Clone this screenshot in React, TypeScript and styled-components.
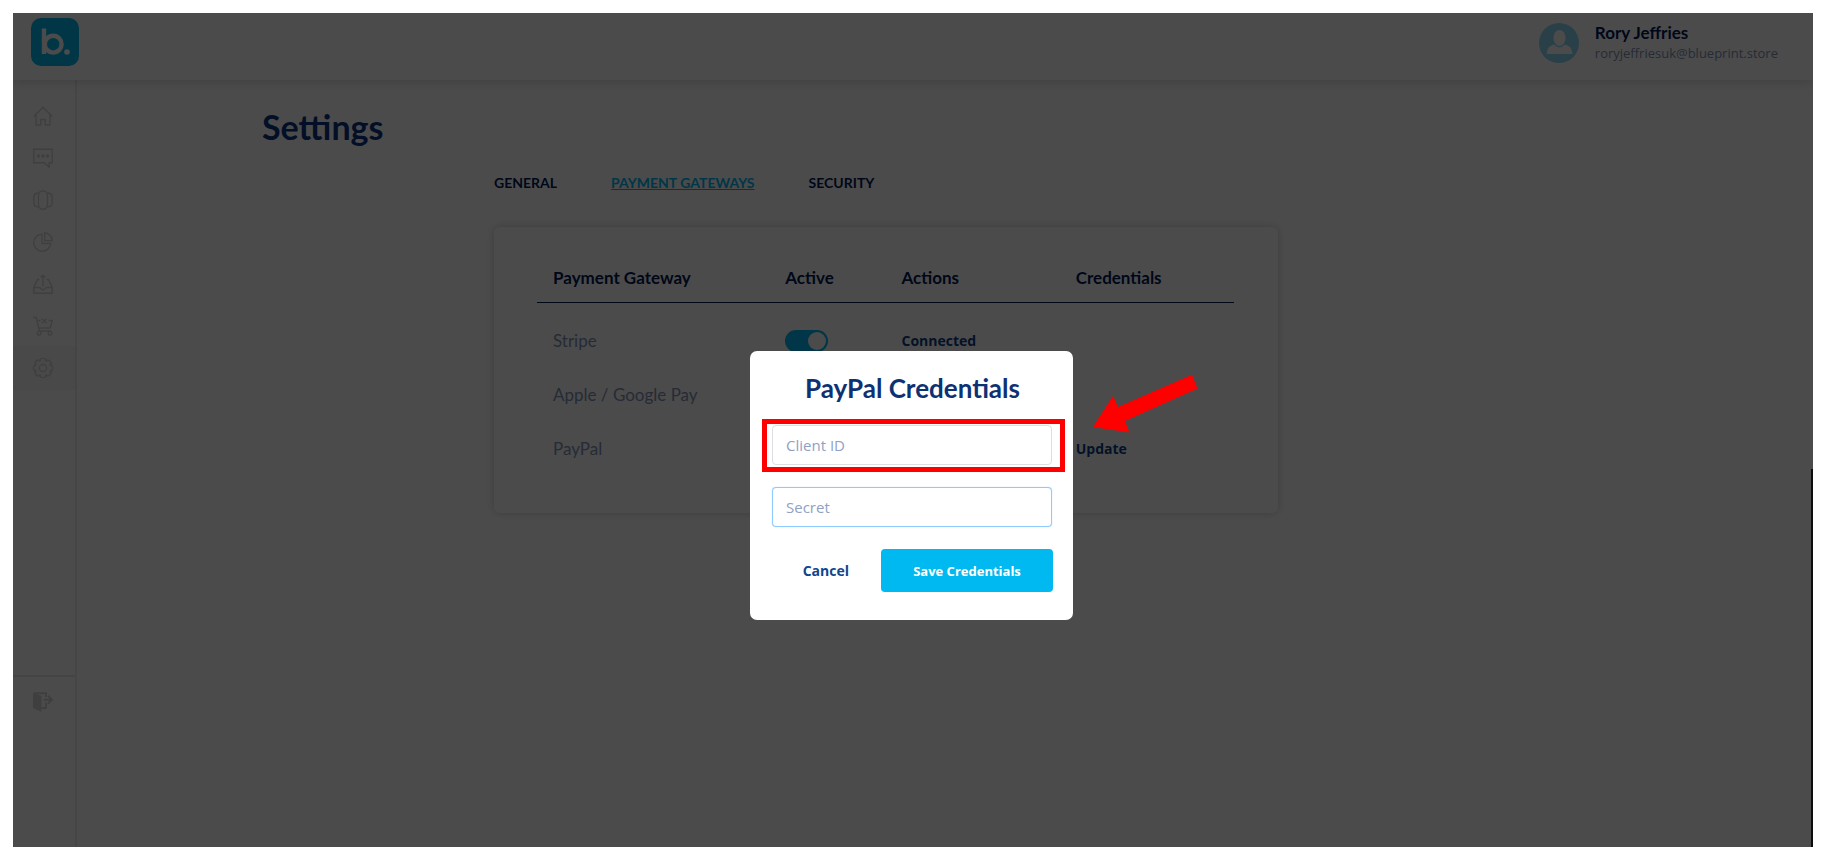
import React from "react";
import styled, { createGlobalStyle } from "styled-components";

const heading = `Lato, "Open Sans", sans-serif`;
const body = `"Open Sans", "Noto Sans", sans-serif`;

const GlobalStyle = createGlobalStyle`
  *, *::before, *::after { box-sizing: border-box; }
  body { margin: 0; background: #fff; font-family: ${body}; color: #001a57; }
`;

const Page = styled.div`
  min-height: 100vh;
  padding: 13px 17px 17px 13px;
  display: flex;
`;

const Window = styled.div`
  position: relative;
  flex: 1;
  min-width: 0;
  display: flex;
  flex-direction: column;
  overflow: hidden;
  background: #fff;
`;

const Header = styled.header`
  position: relative;
  height: 67px;
  padding: 0 35px 0 18px;
  display: flex;
  align-items: center;
  justify-content: space-between;
  box-shadow: 0 3px 10px rgba(0, 0, 0, 0.14);
`;

const HomeLink = styled.a`
  display: block;
  height: 58px;
`;

const Account = styled.div`
  display: flex;
  align-items: center;
  gap: 16px;
  margin-bottom: 8px;
`;

const AccountName = styled.div`
  font: 700 17px/20px ${heading};
`;

const AccountEmail = styled.div`
  font-size: 13px;
  line-height: 20px;
  color: #8394b8;
`;

const Columns = styled.div`
  flex: 1;
  display: flex;
`;

const Sidebar = styled.nav`
  width: 64px;
  padding-top: 15px;
  border-right: 2px solid #ececec;
`;

const SidebarLink = styled.a<{ $active?: boolean }>`
  height: 42px;
  display: flex;
  align-items: center;
  justify-content: center;
  padding-right: 2px;
  color: #d6d6d6;
  background: ${(p) => (p.$active ? "#f6f6f6" : "transparent")};
  box-shadow: ${(p) => (p.$active ? "0 0 2px #e0e0e0" : "none")};
`;

const SidebarFooter = styled.div`
  margin-top: 286px;
  padding-top: 4px;
  border-top: 2px solid #e8e8e8;
`;

const Main = styled.main`
  flex: 1;
  min-width: 0;
`;

const Container = styled.div`
  max-width: 1366px;
  margin: 0 auto;
  padding-top: 25px;
`;

const Title = styled.h1`
  margin: 0;
  font: 700 34px/44px ${heading};
  color: #0d3583;
`;

const Panel = styled.section`
  max-width: 784px;
  margin-left: 232px;
`;

const Tabs = styled.div`
  display: flex;
  gap: 54px;
  padding: 24px 0 34px;
`;

const Tab = styled.a<{ $active?: boolean }>`
  font: 700 14px/20px ${heading};
  color: ${(p) => (p.$active ? "#00b9f0" : "#001a57")};
  text-decoration: ${(p) => (p.$active ? "underline" : "none")};
`;

const Card = styled.div`
  padding: 27px 44px 37px 43px;
  border-radius: 6px;
  box-shadow: 0 0 8px rgba(0, 0, 0, 0.2);
`;

const Table = styled.table`
  width: 100%;
  table-layout: fixed;
  border-collapse: collapse;
`;

const HeadCell = styled.th<{ $width: string }>`
  width: ${(p) => p.$width};
  height: 48px;
  padding: 0 16px;
  text-align: left;
  font: 700 17px/20px ${heading};
  border-bottom: 1px solid #001a57;
`;

const Cell = styled.td`
  height: 54px;
  padding: 0 16px;
  font: 400 17px/20px ${heading};
  color: #8394b8;
`;

const Body = styled.tbody`
  &::before {
    content: "";
    display: block;
    height: 11px;
  }
`;

const CellAction = styled.button`
  display: block;
  border: 0;
  padding: 0;
  background: none;
  font: 700 14px/20px ${body};
  color: #0d3f88;
`;

const Toggle = styled.input`
  appearance: none;
  display: block;
  width: 43px;
  height: 22px;
  margin: 0;
  padding: 2px;
  border-radius: 11px;
  background: #d5dbe6;
  &::before {
    content: "";
    display: block;
    width: 18px;
    height: 18px;
    border-radius: 50%;
    background: #fff;
  }
  &:checked {
    background: #00b9f0;
  }
  &:checked::before {
    margin-left: auto;
  }
`;

const Backdrop = styled.div`
  position: absolute;
  inset: 0;
  padding: 338px 3px 0 0;
  display: flex;
  align-items: flex-start;
  justify-content: center;
  background: rgba(0, 0, 0, 0.705);
`;

const ScrollThumb = styled.div`
  position: absolute;
  right: 0;
  top: 456px;
  bottom: 0;
  width: 2px;
  background: #0c0c0c;
`;

const Dialog = styled.form`
  position: relative;
  width: 323px;
  padding: 18px 20px 28px 22px;
  border-radius: 7px;
  background: #fff;
`;

const DialogTitle = styled.h2`
  margin: 0 0 18px;
  text-align: center;
  font: 700 26px/38px ${heading};
  color: #0d3274;
`;

const Fields = styled.div`
  display: grid;
  gap: 22px;
  padding-right: 1px;
`;

const Field = styled.input<{ $focused?: boolean }>`
  width: 100%;
  height: 40px;
  padding: 0 13px;
  border: 1px solid ${(p) => (p.$focused ? "#8fcbff" : "#dcdfe4")};
  border-radius: 4px;
  outline: 0;
  background: #fff;
  box-shadow: ${(p) => (p.$focused ? "0 0 1px #8fcbff" : "none")};
  font: 400 15px/20px ${body};
  color: #0d3274;
  &::placeholder {
    color: #8fa1c4;
    opacity: 1;
  }
`;

const Actions = styled.div`
  display: flex;
  align-items: center;
  justify-content: flex-end;
  gap: 32px;
  padding-top: 22px;
`;

const CancelButton = styled.button`
  border: 0;
  padding: 0;
  background: none;
  font: 700 14px/20px ${body};
  color: #0d478f;
`;

const SaveButton = styled.button`
  width: 172px;
  height: 43px;
  border: 0;
  border-radius: 4px;
  background: #00b9f0;
  font: 700 13px/20px ${body};
  color: #fff;
`;

const Highlight = styled.div`
  position: absolute;
  left: 12px;
  right: 8px;
  top: 68px;
  height: 53px;
  border: 5px solid #f00;
  pointer-events: none;
`;

const Pointer = styled.svg`
  position: absolute;
  left: 343px;
  top: 23px;
  pointer-events: none;
`;

const Logo = () => (
  <svg width="48" height="48" viewBox="0 0 48 48" aria-label="blueprint">
    <rect width="48" height="48" rx="10" fill="#00b9ec" />
    <g fill="none" stroke="#fff" strokeWidth="4.4">
      <path d="M13 10.500V36" />
      <circle cx="22.2" cy="26.200" r="8.400" />
    </g>
    <circle cx="36" cy="34" r="2.8" fill="#fff" />
  </svg>
);

const Avatar = () => (
  <svg width="40" height="40" viewBox="0 0 40 40" aria-hidden="true">
    <circle cx="20" cy="20" r="20" fill="#8fd8f8" />
    <ellipse cx="20.500" cy="15" rx="6" ry="8" fill="#fff" />
    <path d="M7.500 31C8 25 10.500 23 15 21.500Q20.500 27 26 21.500C30.500 23 33 25 33.500 31Z" fill="#fff" />
  </svg>
);

// Outline of an eight-toothed gear centred on 10,10.
const gearPoints = Array.from({ length: 8 }, (_, tooth) =>
  [
    [-16, 9.3],
    [-7, 9.7],
    [7, 9.7],
    [16, 9.3],
    [18, 7.8],
    [27, 7.8],
  ].map(([offset, radius]) => {
    const angle = ((tooth * 45 + offset) * Math.PI) / 180;
    return `${(10 + radius * Math.sin(angle)).toFixed(2)},${(10 - radius * Math.cos(angle)).toFixed(2)}`;
  })
)
  .flat()
  .join(" ");

const icons: Record<string, React.ReactNode> = {
  Home: <path d="M.8 10.500 10 1.200l9.200 9.300M3 9v10h4.800v-5.500h4.400V19H17V9" />,
  Messages: (
    <>
      <path d="M.8 1.200h18.400v13.600h-3v4.400l-4.800-4.400H.8z" />
      <g fill="currentColor" stroke="none">
        <circle cx="5.400" cy="8" r="1.700" />
        <circle cx="10" cy="8" r="1.700" />
        <circle cx="14.600" cy="8" r="1.700" />
      </g>
    </>
  ),
  Carousel: (
    <>
      <rect x="5.500" y=".8" width="9" height="18.400" rx="4.500" />
      <path d="M5.500 3C2.500 3 .8 4.500.8 7.500v5c0 3 1.700 4.500 4.700 4.500M14.500 3c3 0 4.700 1.500 4.700 4.500v5c0 3-1.700 4.500-4.700 4.500" />
    </>
  ),
  Reports: (
    <>
      <path d="M9 2.200a8.500 8.500 0 1 0 8.700 9.300H9z" />
      <path d="M11.700.8v8h7.500a8 8 0 0 0-7.500-8z" />
    </>
  ),
  Exports: (
    <>
      <path d="M6.500 5.500H4.500L.8 13.500v5.700h18.400v-5.700L15.500 5.500h-2M.8 13.500h5.700l3.500 2.700 3.500-2.700h5.700" />
      <path d="M10 12.500V1.500M7.500 3.500 10 1.200l2.500 2.300" />
    </>
  ),
  Baskets: (
    <>
      <path d="M.3 1.500h3l3 13.500h11.500M4 4.500h3.500M15.500 4.500h3.700l-2 7.500H5.700M8.800 2.800l5 4.500M13.800 2.800l-5 4.500" />
      <circle cx="6" cy="17.200" r="1.800" />
      <circle cx="17" cy="17.200" r="1.800" />
    </>
  ),
  Settings: (
    <>
      <polygon points={gearPoints} strokeLinejoin="round" />
      <circle cx="10" cy="10" r="3.600" />
    </>
  ),
};

const Icon = ({ name }: { name: string }) => (
  <svg width="20" height="20" viewBox="0 0 20 20" fill="none" stroke="currentColor" strokeWidth="1.400" aria-hidden="true">
    {icons[name]}
  </svg>
);

const LogoutIcon = () => (
  <svg width="20" height="20" viewBox="0 0 20 20" aria-hidden="true">
    <path d="M0 .5 8.500 4v16L0 16z" fill="currentColor" />
    <path d="M1 1.200h12V5M13 10.500V16H8.500M10.500 7.700H18M15 3.700l4 4-4 4" fill="none" stroke="currentColor" strokeWidth="2" />
  </svg>
);

const gateways = [
  { name: "Stripe", active: true, action: "Connected" },
  { name: "Apple / Google Pay", active: true },
  { name: "PayPal", active: true, credentials: "Update" },
];

export default function App() {
  return (
    <>
      <GlobalStyle />
      <Page>
        <Window>
          <Header>
            <HomeLink href="#">
              <Logo />
            </HomeLink>
            <Account>
              <Avatar />
              <div>
                <AccountName>Rory Jeffries</AccountName>
                <AccountEmail>roryjeffriesuk@blueprint.store</AccountEmail>
              </div>
            </Account>
          </Header>
          <Columns>
            <Sidebar>
              {Object.keys(icons).map((name) => (
                <SidebarLink key={name} href="#" aria-label={name} $active={name === "Settings"}>
                  <Icon name={name} />
                </SidebarLink>
              ))}
              <SidebarFooter>
                <SidebarLink href="#" aria-label="Log out">
                  <LogoutIcon />
                </SidebarLink>
              </SidebarFooter>
            </Sidebar>
            <Main>
              <Container>
                <Title>Settings</Title>
                <Panel>
                  <Tabs>
                    <Tab href="#">GENERAL</Tab>
                    <Tab href="#" $active>PAYMENT GATEWAYS</Tab>
                    <Tab href="#">SECURITY</Tab>
                  </Tabs>
                  <Card>
                    <Table>
                      <thead>
                        <tr>
                          <HeadCell $width="33.33%">Payment Gateway</HeadCell>
                          <HeadCell $width="16.67%">Active</HeadCell>
                          <HeadCell $width="25%">Actions</HeadCell>
                          <HeadCell $width="25%">Credentials</HeadCell>
                        </tr>
                      </thead>
                      <Body>
                        {gateways.map((g) => (
                          <tr key={g.name}>
                            <Cell>{g.name}</Cell>
                            <Cell>
                              <Toggle type="checkbox" aria-label={g.name} defaultChecked={g.active} />
                            </Cell>
                            <Cell>{g.action && <CellAction>{g.action}</CellAction>}</Cell>
                            <Cell>{g.credentials && <CellAction>{g.credentials}</CellAction>}</Cell>
                          </tr>
                        ))}
                      </Body>
                    </Table>
                  </Card>
                </Panel>
              </Container>
            </Main>
          </Columns>
          <Backdrop>
            <ScrollThumb />
            <Dialog role="dialog" aria-labelledby="dialog-title" onSubmit={(e) => e.preventDefault()}>
              <DialogTitle id="dialog-title">PayPal Credentials</DialogTitle>
              <Fields>
                <Field type="text" placeholder="Client ID" aria-label="Client ID" />
                <Field type="text" placeholder="Secret" aria-label="Secret" $focused />
              </Fields>
              <Actions>
                <CancelButton type="button">Cancel</CancelButton>
                <SaveButton type="submit">Save Credentials</SaveButton>
              </Actions>
              <Highlight />
              <Pointer width="105" height="60" viewBox="0 0 105 60" aria-hidden="true">
                <path d="M0 53 20 22 25 33 99 .7 104.500 14.500 32 47 36.500 58.500Z" fill="#f00" />
              </Pointer>
            </Dialog>
          </Backdrop>
        </Window>
      </Page>
    </>
  );
}
